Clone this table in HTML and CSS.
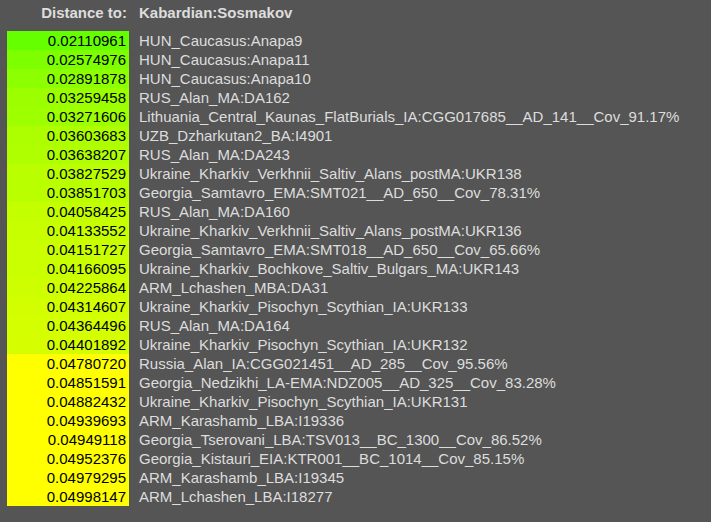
FILE: index.html
```html
<!DOCTYPE html>
<html>
<head>
<meta charset="utf-8">
<link rel="stylesheet" href="styles.css">
</head>
<body>
<div class="wrap">
  <div class="head">
    <div class="hlabel">Distance to:</div>
    <div class="htarget">Kabardian:Sosmakov</div>
  </div>
  <div class="list">
    <div class="val" style="background:rgb(102,255,0)">0.02110961</div><div class="name">HUN_Caucasus:Anapa9</div>
    <div class="val" style="background:rgb(125,255,0)">0.02574976</div><div class="name">HUN_Caucasus:Anapa11</div>
    <div class="val" style="background:rgb(140,255,0)">0.02891878</div><div class="name">HUN_Caucasus:Anapa10</div>
    <div class="val" style="background:rgb(156,255,0)">0.03259458</div><div class="name">RUS_Alan_MA:DA162</div>
    <div class="val" style="background:rgb(157,255,0)">0.03271606</div><div class="name">Lithuania_Central_Kaunas_FlatBurials_IA:CGG017685__AD_141__Cov_91.17%</div>
    <div class="val" style="background:rgb(173,255,0)">0.03603683</div><div class="name">UZB_Dzharkutan2_BA:I4901</div>
    <div class="val" style="background:rgb(175,255,0)">0.03638207</div><div class="name">RUS_Alan_MA:DA243</div>
    <div class="val" style="background:rgb(185,255,0)">0.03827529</div><div class="name">Ukraine_Kharkiv_Verkhnii_Saltiv_Alans_postMA:UKR138</div>
    <div class="val" style="background:rgb(186,255,0)">0.03851703</div><div class="name">Georgia_Samtavro_EMA:SMT021__AD_650__Cov_78.31%</div>
    <div class="val" style="background:rgb(196,255,0)">0.04058425</div><div class="name">RUS_Alan_MA:DA160</div>
    <div class="val" style="background:rgb(200,255,0)">0.04133552</div><div class="name">Ukraine_Kharkiv_Verkhnii_Saltiv_Alans_postMA:UKR136</div>
    <div class="val" style="background:rgb(201,255,0)">0.04151727</div><div class="name">Georgia_Samtavro_EMA:SMT018__AD_650__Cov_65.66%</div>
    <div class="val" style="background:rgb(202,255,0)">0.04166095</div><div class="name">Ukraine_Kharkiv_Bochkove_Saltiv_Bulgars_MA:UKR143</div>
    <div class="val" style="background:rgb(205,255,0)">0.04225864</div><div class="name">ARM_Lchashen_MBA:DA31</div>
    <div class="val" style="background:rgb(209,255,0)">0.04314607</div><div class="name">Ukraine_Kharkiv_Pisochyn_Scythian_IA:UKR133</div>
    <div class="val" style="background:rgb(211,255,0)">0.04364496</div><div class="name">RUS_Alan_MA:DA164</div>
    <div class="val" style="background:rgb(213,255,0)">0.04401892</div><div class="name">Ukraine_Kharkiv_Pisochyn_Scythian_IA:UKR132</div>
    <div class="val" style="background:rgb(255,255,0)">0.04780720</div><div class="name">Russia_Alan_IA:CGG021451__AD_285__Cov_95.56%</div>
    <div class="val" style="background:rgb(255,255,0)">0.04851591</div><div class="name">Georgia_Nedzikhi_LA-EMA:NDZ005__AD_325__Cov_83.28%</div>
    <div class="val" style="background:rgb(255,255,0)">0.04882432</div><div class="name">Ukraine_Kharkiv_Pisochyn_Scythian_IA:UKR131</div>
    <div class="val" style="background:rgb(255,255,0)">0.04939693</div><div class="name">ARM_Karashamb_LBA:I19336</div>
    <div class="val" style="background:rgb(255,255,0)">0.04949118</div><div class="name">Georgia_Tserovani_LBA:TSV013__BC_1300__Cov_86.52%</div>
    <div class="val" style="background:rgb(255,255,0)">0.04952376</div><div class="name">Georgia_Kistauri_EIA:KTR001__BC_1014__Cov_85.15%</div>
    <div class="val" style="background:rgb(255,255,0)">0.04979295</div><div class="name">ARM_Karashamb_LBA:I19345</div>
    <div class="val" style="background:rgb(255,255,0)">0.04998147</div><div class="name">ARM_Lchashen_LBA:I18277</div>
  </div>
</div>
</body>
</html>
```
FILE: styles.css
```css
html, body {
  margin: 0;
  padding: 0;
  background: #555555;
}
body {
  font-family: "Liberation Sans", Arial, sans-serif;
  font-size: 15px;
  color: #dddddd;
}
.wrap {
  padding: 3px 0 0 7px;
}
.head {
  display: flex;
  height: 28px;
  font-weight: bold;
  line-height: 19px;
}
.hlabel {
  width: 122px;
  box-sizing: border-box;
  text-align: right;
  padding-right: 2px;
}
.htarget {
  padding-left: 10px;
}
.list {
  display: grid;
  grid-template-columns: 122px auto;
  grid-auto-rows: 19px;
  line-height: 19px;
}
.val {
  color: #000;
  text-align: right;
  padding-right: 3px;
}
.name {
  padding-left: 10px;
  white-space: nowrap;
}
```
